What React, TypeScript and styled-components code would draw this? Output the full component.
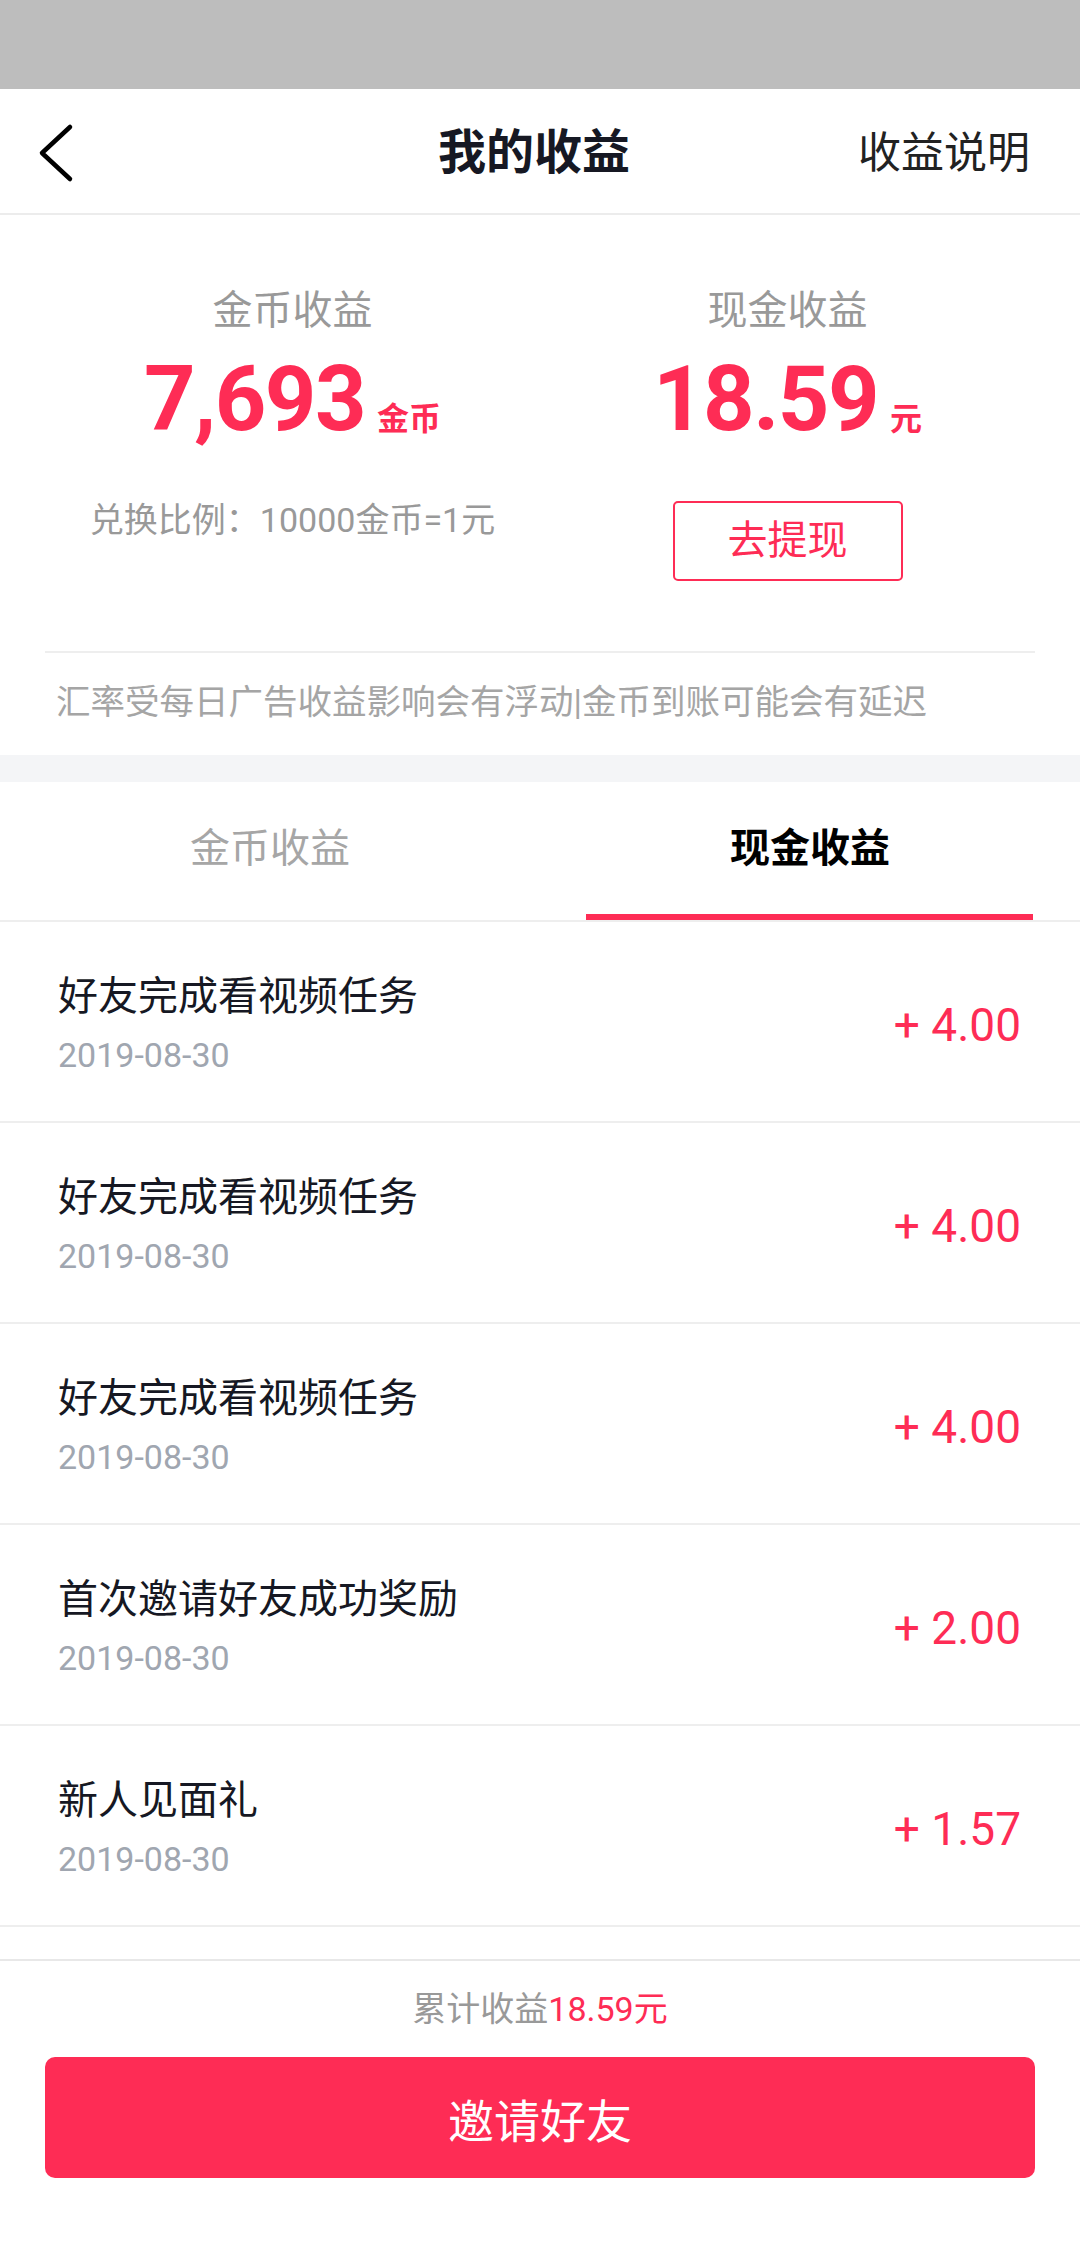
import React from "react";
import styled, { createGlobalStyle } from "styled-components";

const RED = "#fe2c55";
const FONT = `Roboto, "Noto Sans CJK SC", sans-serif`;

const Global = createGlobalStyle`
  html, body { margin: 0; padding: 0; background: #fff; }
  body { font-family: ${FONT}; -webkit-font-smoothing: antialiased; }
  * { box-sizing: border-box; }
`;

const Page = styled.div`
  height: 100vh;
  display: flex;
  flex-direction: column;
  overflow: hidden;
  background: #fff;
`;

const StatusBar = styled.div`
  height: 89px;
  flex: none;
  background: #bdbdbd;
`;

const NavBar = styled.div`
  height: 126px;
  flex: none;
  display: grid;
  grid-template-columns: 1fr auto 1fr;
  align-items: center;
  padding: 4px 50px 0 38px;
  border-bottom: 2px solid #ececec;
`;

const BackButton = styled.button`
  justify-self: start;
  display: flex;
  align-items: center;
  background: none;
  border: 0;
  padding: 0;
  margin: 0;
  cursor: pointer;
`;

const NavTitle = styled.div`
  font-size: 48px;
  font-weight: 700;
  color: #161823;
  line-height: 60px;
`;

const NavAction = styled.div`
  justify-self: end;
  font-size: 43px;
  color: #222;
  line-height: 56px;
`;

const Summary = styled.section`
  flex: none;
  padding: 70px 45px 30px;
`;

const Columns = styled.div`
  display: grid;
  grid-template-columns: 1fr 1fr;
`;

const Column = styled.div`
  display: flex;
  flex-direction: column;
  align-items: center;
`;

const ColLabel = styled.div`
  font-size: 40px;
  line-height: 52px;
  color: #999;
`;

const AmountLine = styled.div`
  margin-top: 13px;
  display: flex;
  align-items: baseline;
  color: ${RED};
  height: 100px;
`;

const BigNumber = styled.span`
  font-size: 90px;
  font-weight: 700;
  line-height: 100px;
  letter-spacing: -1.5px;
`;

const Unit = styled.span`
  margin-left: 12px;
  font-size: 32px;
  font-weight: 700;
`;

const RatioText = styled.div`
  margin-top: 48px;
  font-size: 34px;
  line-height: 44px;
  color: #999;
`;

const WithdrawButton = styled.button`
  margin-top: 51px;
  width: 230px;
  height: 80px;
  border: 2px solid ${RED};
  border-radius: 5px;
  background: #fff;
  color: ${RED};
  font-family: ${FONT};
  font-size: 40px;
  line-height: 1;
  padding: 0;
`;

const Divider = styled.div`
  margin-top: 70px;
  height: 2px;
  background: #eeeeee;
`;

const Notice = styled.div`
  margin-top: 26px;
  padding-left: 11px;
  font-size: 34.5px;
  line-height: 46px;
  color: #a5a5a5;
  white-space: nowrap;
`;

const GrayGap = styled.div`
  flex: none;
  height: 27px;
  background: #f4f5f7;
`;

const Tabs = styled.div`
  flex: none;
  display: grid;
  grid-template-columns: 1fr 1fr;
  border-bottom: 2px solid #eeeeee;
`;

const Tab = styled.div`
  height: 138px;
  display: flex;
  flex-direction: column;
  align-items: center;
  padding-top: 40px;
`;

const TabText = styled.div<{ $active?: boolean }>`
  font-size: 40px;
  line-height: 54px;
  font-weight: ${(p) => (p.$active ? 700 : 400)};
  color: ${(p) => (p.$active ? "#000" : "#a6a6a6")};
`;

const TabIndicator = styled.div<{ $active?: boolean }>`
  margin-top: 38px;
  align-self: stretch;
  margin-left: 46px;
  margin-right: 47px;
  height: 6px;
  background: ${(p) => (p.$active ? RED : "transparent")};
`;

const List = styled.div`
  flex: 1;
  min-height: 0;
  overflow: hidden;
`;

const Row = styled.div`
  height: 201px;
  display: flex;
  align-items: center;
  justify-content: space-between;
  padding: 4px 59px 0 58px;
  border-bottom: 2px solid #eeeeee;
`;

const RowInfo = styled.div`
  display: flex;
  flex-direction: column;
  gap: 10px;
`;

const RowTitle = styled.div`
  font-size: 40px;
  line-height: 52px;
  color: #161823;
`;

const RowDate = styled.div`
  font-size: 34px;
  line-height: 44px;
  color: #a0a6b0;
`;

const RowAmount = styled.div`
  font-size: 46px;
  line-height: 56px;
  color: ${RED};
  margin-top: 2px;
`;

const Footer = styled.footer`
  flex: none;
  border-top: 2px solid #e8e8e8;
  padding: 26px 45px 68px;
  display: flex;
  flex-direction: column;
  align-items: center;
`;

const Total = styled.div`
  font-size: 34px;
  line-height: 44px;
  color: #999;
`;

const TotalValue = styled.span`
  color: ${RED};
`;

const InviteButton = styled.button`
  margin-top: 26px;
  width: 100%;
  height: 121px;
  border: 0;
  border-radius: 10px;
  background: ${RED};
  color: #fff;
  font-family: ${FONT};
  font-size: 46px;
  padding: 0;
`;

const records = [
  { title: "好友完成看视频任务", date: "2019-08-30", amount: "+ 4.00" },
  { title: "好友完成看视频任务", date: "2019-08-30", amount: "+ 4.00" },
  { title: "好友完成看视频任务", date: "2019-08-30", amount: "+ 4.00" },
  { title: "首次邀请好友成功奖励", date: "2019-08-30", amount: "+ 2.00" },
  { title: "新人见面礼", date: "2019-08-30", amount: "+ 1.57" },
];

export default function App() {
  return (
    <Page>
      <Global />
      <StatusBar />
      <NavBar>
        <BackButton aria-label="返回">
          <svg width="40" height="60" viewBox="0 0 40 60">
            <path d="M32 4 L4 30 L32 56" fill="none" stroke="#000" strokeWidth="4.5" strokeLinecap="round" strokeLinejoin="round" />
          </svg>
        </BackButton>
        <NavTitle>我的收益</NavTitle>
        <NavAction>收益说明</NavAction>
      </NavBar>

      <Summary>
        <Columns>
          <Column>
            <ColLabel>金币收益</ColLabel>
            <AmountLine>
              <BigNumber>7,693</BigNumber>
              <Unit>金币</Unit>
            </AmountLine>
            <RatioText>兑换比例：10000金币=1元</RatioText>
          </Column>
          <Column>
            <ColLabel>现金收益</ColLabel>
            <AmountLine>
              <BigNumber>18.59</BigNumber>
              <Unit>元</Unit>
            </AmountLine>
            <WithdrawButton>去提现</WithdrawButton>
          </Column>
        </Columns>
        <Divider />
        <Notice>汇率受每日广告收益影响会有浮动|金币到账可能会有延迟</Notice>
      </Summary>

      <GrayGap />

      <Tabs>
        <Tab>
          <TabText>金币收益</TabText>
          <TabIndicator />
        </Tab>
        <Tab>
          <TabText $active>现金收益</TabText>
          <TabIndicator $active />
        </Tab>
      </Tabs>

      <List>
        {records.map((r, i) => (
          <Row key={i}>
            <RowInfo>
              <RowTitle>{r.title}</RowTitle>
              <RowDate>{r.date}</RowDate>
            </RowInfo>
            <RowAmount>{r.amount}</RowAmount>
          </Row>
        ))}
      </List>

      <Footer>
        <Total>
          累计收益<TotalValue>18.59元</TotalValue>
        </Total>
        <InviteButton>邀请好友</InviteButton>
      </Footer>
    </Page>
  );
}
